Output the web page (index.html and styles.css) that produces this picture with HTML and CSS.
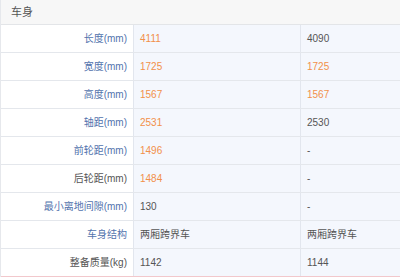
FILE: index.html
```html
<!DOCTYPE html>
<html lang="zh">
<head>
<meta charset="utf-8">
<link rel="stylesheet" href="styles.css">
</head>
<body>
<div class="spec">
  <div class="head">车身</div>
  <div class="row"><div class="lbl link">长度(mm)</div><div class="val hi">4111</div><div class="val">4090</div></div>
  <div class="row"><div class="lbl link">宽度(mm)</div><div class="val hi">1725</div><div class="val hi">1725</div></div>
  <div class="row"><div class="lbl link">高度(mm)</div><div class="val hi">1567</div><div class="val hi">1567</div></div>
  <div class="row"><div class="lbl link">轴距(mm)</div><div class="val hi">2531</div><div class="val">2530</div></div>
  <div class="row"><div class="lbl link">前轮距(mm)</div><div class="val hi">1496</div><div class="val">-</div></div>
  <div class="row"><div class="lbl">后轮距(mm)</div><div class="val hi">1484</div><div class="val">-</div></div>
  <div class="row"><div class="lbl link">最小离地间隙(mm)</div><div class="val">130</div><div class="val">-</div></div>
  <div class="row"><div class="lbl link">车身结构</div><div class="val">两厢跨界车</div><div class="val">两厢跨界车</div></div>
  <div class="row last"><div class="lbl">整备质量(kg)</div><div class="val">1142</div><div class="val">1144</div></div>
</div>
</body>
</html>
```

FILE: styles.css
```css
html, body {
  margin: 0;
  padding: 0;
  background: #ffffff;
}
body {
  font-family: "Liberation Sans", "Noto Sans CJK SC", sans-serif;
  font-size: 10px;
  color: #555555;
}
.spec {
  width: 400px;
  border-left: 1px solid #e6e8ec;
  box-sizing: border-box;
}
.head {
  height: 24px;
  line-height: 24px;
  padding-left: 10px;
  background: #f7f7f7;
  border-bottom: 1px solid #e3e5e8;
  font-size: 11px;
  color: #555555;
}
.row {
  display: grid;
  grid-template-columns: 132px 167px 1fr;
  height: 28px;
  border-bottom: 1px solid #e4e7ec;
  box-sizing: border-box;
}
.row.last {
  border-bottom: 3px solid #f2c8cc;
  height: 29px;
}
.lbl {
  text-align: right;
  padding-right: 6px;
  line-height: 27px;
  background: #ffffff;
  color: #555555;
}
.lbl.link {
  color: #5273ad;
}
.val {
  padding-left: 6px;
  line-height: 27px;
  background: #f4f7fd;
  border-left: 1px solid #e2e6ee;
  color: #555555;
}
.val.hi {
  color: #f2904a;
}
```
